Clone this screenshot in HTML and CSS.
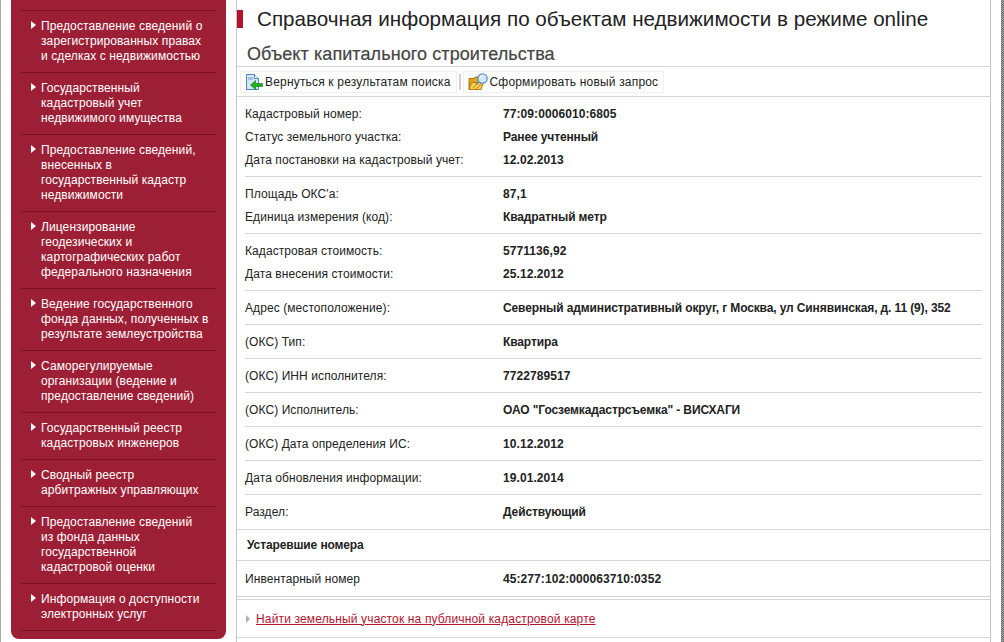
FILE: index.html
```html
<!DOCTYPE html>
<html lang="ru">
<head>
<meta charset="utf-8">
<title>Справочная информация</title>
<link rel="stylesheet" href="styles.css">
</head>
<body>
<div class="page">
  <nav class="side">
    <ul class="menu">
      <li>Предоставление сведений о<br>зарегистрированных правах<br>и сделках с недвижимостью</li>
      <li>Государственный<br>кадастровый учет<br>недвижимого имущества</li>
      <li>Предоставление сведений,<br>внесенных в<br>государственный кадастр<br>недвижимости</li>
      <li>Лицензирование<br>геодезических и<br>картографических работ<br>федерального назначения</li>
      <li>Ведение государственного<br>фонда данных, полученных в<br>результате землеустройства</li>
      <li>Саморегулируемые<br>организации (ведение и<br>предоставление сведений)</li>
      <li>Государственный реестр<br>кадастровых инженеров</li>
      <li>Сводный реестр<br>арбитражных управляющих</li>
      <li>Предоставление сведений<br>из фонда данных<br>государственной<br>кадастровой оценки</li>
      <li>Информация о доступности<br>электронных услуг</li>
    </ul>
  </nav>
  <main class="main">
    <h1 class="title">Справочная информация по объектам недвижимости в режиме online</h1>
    <h2 class="sub">Объект капитального строительства</h2>
    <div class="tools">
      <a class="tool"><svg class="ico" width="18" height="18" viewBox="0 0 18 18"><path d="M1.500 1.500h8l4 4v11h-12z" fill="#d6e6f6" stroke="#4f86bd"/><path d="M9.500 1.500v4h4" fill="#fff" stroke="#4f86bd"/><path d="M3 4h5v3H3z" fill="#9fc4e8"/><path d="M17.500 10.500h-7v-3l-5 4.500 5 4.500v-3h7z" fill="#1fb01f" stroke="#0f7a0f" stroke-width=".6"/></svg>Вернуться к результатам поиска</a>
      <span class="sep"></span>
      <a class="tool"><svg class="ico" width="20" height="18" viewBox="0 0 20 18"><path d="M1 5.500h5l1-1.500h5v12.500H1z" fill="#e3a520" stroke="#a87412"/><path d="M1 16.500l2.500-7h12l-2.500 7z" fill="#f8cd4e" stroke="#b07c14"/><path d="M5 15l4-4M8 16l5-5" stroke="#c98a16"/><path d="M11.500 8.500l-3.500 3" stroke="#8a8a8a" stroke-width="2"/><circle cx="14.500" cy="5.500" r="4.700" fill="#d3e8fb" stroke="#5c8fc4" stroke-width="1.300"/><path d="M12 5a2.500 2.500 0 0 1 2.500-2.500" fill="none" stroke="#fff"/></svg>Сформировать новый запрос</a>
    </div>
    <section class="group">
      <div class="row"><span class="k">Кадастровый номер:</span><b class="v num">77:09:0006010:6805</b></div>
      <div class="row"><span class="k">Статус земельного участка:</span><b class="v">Ранее учтенный</b></div>
      <div class="row"><span class="k">Дата постановки на кадастровый учет:</span><b class="v num">12.02.2013</b></div>
    </section>
    <section class="group">
      <div class="row"><span class="k">Площадь ОКС'а:</span><b class="v num">87,1</b></div>
      <div class="row"><span class="k">Единица измерения (код):</span><b class="v">Квадратный метр</b></div>
    </section>
    <section class="group">
      <div class="row"><span class="k">Кадастровая стоимость:</span><b class="v num">5771136,92</b></div>
      <div class="row"><span class="k">Дата внесения стоимости:</span><b class="v num">25.12.2012</b></div>
    </section>
    <section class="group"><div class="row"><span class="k">Адрес (местоположение):</span><b class="v">Северный административный округ, г Москва, ул Синявинская, д. 11 (9), 352</b></div></section>
    <section class="group"><div class="row"><span class="k">(ОКС) Тип:</span><b class="v">Квартира</b></div></section>
    <section class="group"><div class="row"><span class="k">(ОКС) ИНН исполнителя:</span><b class="v num">7722789517</b></div></section>
    <section class="group"><div class="row"><span class="k">(ОКС) Исполнитель:</span><b class="v">ОАО "Госземкадастрсъемка" - ВИСХАГИ</b></div></section>
    <section class="group"><div class="row"><span class="k">(ОКС) Дата определения ИС:</span><b class="v num">10.12.2012</b></div></section>
    <section class="group"><div class="row"><span class="k">Дата обновления информации:</span><b class="v num">19.01.2014</b></div></section>
    <section class="group last"><div class="row"><span class="k">Раздел:</span><b class="v">Действующий</b></div></section>
    <div class="band"><b class="v">Устаревшие номера</b></div>
    <div class="inv"><span class="k">Инвентарный номер</span><b class="v num">45:277:102:000063710:0352</b></div>
    <div class="link"><span class="arr"></span><a href="#">Найти земельный участок на публичной кадастровой карте</a></div>
  </main>
  <div class="edge"></div>
</div>
</body>
</html>
```
FILE: styles.css
```css
html, body { margin: 0; padding: 0; background: #fff; height: 642px; overflow: hidden; }
body { font-family: "Liberation Sans", Arial, sans-serif; font-size: 12px; color: #222; }
.page { display: flex; height: 642px; border-left: 1px solid #a8a8a8; box-sizing: border-box; overflow: hidden; }
.side { width: 215px; height: 639px; margin-left: 10px; background: #9c1f35; border-radius: 0 0 8px 8px; padding: 10px 10px 0; box-sizing: border-box; flex: none; }
.menu { list-style: none; margin: 0; padding: 0; border-top: 1px solid #7a0f22; }
.menu li { position: relative; color: #fff; line-height: 15px; padding: 8px 0 8px 20px; border-bottom: 1px solid #7a0f22; letter-spacing: .1px; white-space: nowrap; }
.menu li::before { content: ""; position: absolute; left: 10px; top: 10px; border-left: 5px solid #fff; border-top: 4px solid transparent; border-bottom: 4px solid transparent; }
.main { width: 755px; margin-left: 10px; flex: none; border-left: 1px solid #c4c4c4; border-right: 1px solid #c4c4c4; box-sizing: border-box; height: 642px; }
.title { margin: 0; font-size: 20.630px; font-weight: normal; line-height: 18px; padding: 10px 0 0 20px; position: relative; color: #222; height: 28px; box-sizing: border-box; white-space: nowrap; }
.title::before { content: ""; position: absolute; left: 0; top: 10px; width: 6px; height: 18px; background: #b5122f; }
.sub { margin: 0; font-size: 18px; font-weight: normal; color: #444; line-height: 22px; padding: 15px 0 0 10px; height: 38px; box-sizing: border-box; letter-spacing: .09px; -webkit-text-stroke: .2px #444; }
.tools { display: flex; align-items: center; gap: 2px; height: 31px; box-sizing: border-box; border-top: 1px solid #d4d4d4; border-bottom: 1px solid #d4d4d4; padding-left: 3px; }
.tool { display: flex; align-items: center; height: 22px; box-sizing: border-box; border: 1px solid #f0f0f0; padding: 0 5px 0 4px; color: #222; letter-spacing: .18px; }
.ico { margin-right: 2px; flex: none; }
.sep { width: 2px; height: 16px; background: #d0d0d0; }
.group { margin: 0 8px; padding: 6px 0 4px; border-bottom: 1px solid #d4d4d4; }
.row { display: flex; line-height: 23px; letter-spacing: .08px; }
.k { width: 258px; flex: none; }
.v { font-weight: bold; letter-spacing: -.12px; }
.v.num { letter-spacing: .08px; }
.group.last { margin: 0; padding: 6px 8px 5px; }
.band { padding: 0 10px; height: 31px; line-height: 31px; border-bottom: 1px solid #d4d4d4; box-sizing: border-box; }
.inv { display: flex; padding: 0 8px; height: 36px; line-height: 36px; letter-spacing: .08px; border-bottom: 1px solid #d4d4d4; box-sizing: border-box; }
.link { height: 39px; margin-top: 2px; border-top: 1px solid #d4d4d4; border-bottom: 1px solid #d4d4d4; box-sizing: border-box; display: flex; align-items: center; padding-left: 9px; gap: 6px; }
.arr { border-left: 4px solid #b0b0b0; border-top: 4px solid transparent; border-bottom: 4px solid transparent; }
.link a { color: #b5122f; text-decoration: underline; letter-spacing: .15px; }
.edge { width: 3px; margin-left: auto; flex: none; background: repeating-conic-gradient(#6f6f6f 0 25%, #a0a0a0 0 50%) 0 0 / 2px 2px; }
```
